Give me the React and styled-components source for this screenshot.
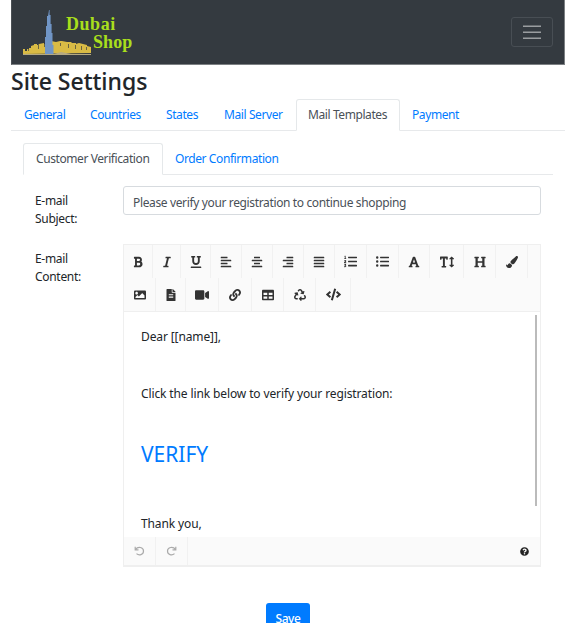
import React from "react";
import styled, { createGlobalStyle } from "styled-components";
import {
  FaBold, FaItalic, FaUnderline, FaAlignLeft, FaAlignCenter, FaAlignRight, FaAlignJustify,
  FaListOl, FaListUl, FaFont, FaTextHeight, FaHeading, FaPaintBrush, FaImage, FaFileAlt,
  FaVideo, FaLink, FaTable, FaRecycle, FaCode, FaQuestionCircle,
} from "react-icons/fa";

const Global = createGlobalStyle`
  * { box-sizing: border-box; }
  html, body { margin: 0; background: #fff; }
  body {
    height: 623px;
    overflow: hidden;
    color: #212529;
    font: 12px/18px "Noto Sans", "Open Sans", sans-serif;
  }
`;

const Page = styled.div`
  width: 554px;
  height: 623px;
  margin-left: 11px;
  overflow: hidden;
`;

const Navbar = styled.header`
  height: 65px;
  display: flex;
  justify-content: space-between;
  padding: 0 11px;
  background: #343a40;
  border: 1px solid #7c8083;
  border-top: 0;
  border-left-color: #4b5055;
`;

const Brand = styled.div`
  display: flex;
`;

const BrandName = styled.div`
  padding-top: 15px;
  margin-left: -26px;
  color: #a9df1c;
  font: 700 18px/18px "Liberation Serif", serif;
  letter-spacing: 0.55px;
  span { display: block; }
  span + span { margin-left: 27px; letter-spacing: 0.1px; }
`;

const MenuButton = styled.button`
  width: 42px;
  height: 30px;
  margin-top: 17px;
  padding: 0;
  display: flex;
  align-items: center;
  justify-content: center;
  background: transparent;
  border: 1px solid #484e54;
  border-radius: 3px;
`;

const Title = styled.h1`
  margin: 0;
  height: 34px;
  font: 500 23px/32px "Noto Sans", sans-serif;
  -webkit-text-stroke: 0.12px #212529;
  white-space: nowrap;
`;

const Tabs = styled.nav`
  display: flex;
  height: 32px;
  width: ${(p) => p.$width}px;
  margin: ${(p) => p.$margin || 0};
  border-bottom: 1px solid #e7e9eb;
`;

const Tab = styled.a`
  height: 32px;
  width: ${(p) => p.$width}px;
  padding-left: ${(p) => p.$inset || 12}px;
  line-height: 30px;
  white-space: nowrap;
  letter-spacing: -0.41px;
  color: ${(p) => (p.$active ? "#495057" : "#007bff")};
  background: ${(p) => (p.$active ? "#fff" : "transparent")};
  border: 1px solid ${(p) => (p.$active ? "#e5e8ea" : "transparent")};
  border-bottom-color: ${(p) => (p.$active ? "#fff" : "transparent")};
  border-radius: 3px 3px 0 0;
`;

const FormRow = styled.div`
  display: grid;
  grid-template-columns: 88px 418px;
  margin: ${(p) => p.$margin};
`;

const Label = styled.label`
  padding-top: ${(p) => p.$top}px;
  letter-spacing: -0.3px;
`;

const SubjectField = styled.div`
  height: 29px;
  padding: 1px 9px 0;
  line-height: 29px;
  border: 1px solid #d7dbdf;
  border-radius: 3px;
  color: #495057;
  letter-spacing: -0.36px;
`;

const Editor = styled.section`
  height: 323px;
  border: 1px solid #efefef;
  border-bottom-width: 2px;
`;

const Toolbar = styled.div`
  height: 67px;
  background: #fafafa;
  border-bottom: 1px solid #efefef;
  color: #333;
`;

const ToolRow = styled.div`
  display: flex;
  height: ${(p) => p.$height}px;
`;

const Tool = styled.button`
  width: ${(p) => p.$width}px;
  padding: 0;
  display: flex;
  align-items: center;
  justify-content: center;
  color: inherit;
  background: transparent;
  border: 0;
  border-right: 1px solid #f1f1f1;
  font-size: ${(p) => p.$size || 12}px;
`;

const Content = styled.div`
  position: relative;
  height: 225px;
  padding: 16px 17px 0;
  overflow: hidden;
`;

const Line = styled.p`
  margin: ${(p) => p.$margin || 0};
  letter-spacing: -0.12px;
  white-space: nowrap;
`;

const VerifyLink = styled.a`
  display: block;
  margin-top: 36px;
  color: #007bff;
  font-size: 21px;
  line-height: 30px;
`;

const Scrollbar = styled.i`
  position: absolute;
  top: 3px;
  right: 3px;
  width: 2.5px;
  height: 191px;
  background: #bbb;
`;

const Footer = styled.footer`
  display: flex;
  justify-content: space-between;
  height: 28px;
  background: #fafafa;
  color: #aaa;
`;

const Help = styled.span`
  display: flex;
  align-items: center;
  padding-right: 11px;
  color: #222;
  font-size: 9px;
`;

const SaveButton = styled.button`
  display: block;
  width: 44px;
  height: 31px;
  margin: 36px 0 0 255px;
  padding: 0;
  border: 0;
  border-radius: 3px;
  color: #fff;
  background: #007bff;
  font: 500 12px/28px "Noto Sans", sans-serif;
  letter-spacing: -0.4px;
`;

const Skyline = () => (
  <svg width="69" height="58" viewBox="0 0 69 58">
    <path fill="#d9bb45" d="M0 54V49h2v2h2v-2h2v-1h2v-2l3-1v-1h3v1h2v-1l5-1v1h2v-2h5v-1l5 1 4-1h2l5 1h4l1 1h4v1l3-1 4 1 4 1v1l4 1v6z" />
    <path stroke="#6b6440" d="M5.500 49v2M15.500 44v5M21.500 44v3M37.500 43v3M45.500 44v4M52.500 45v4M58.500 46v4M63.500 47v3" />
    <path fill="#b5a982" d="M0 54h68v1H0zM31 54l7-2 10 2z" />
    <path fill="#7095c6" d="M26 10h.6v5h1v9h1v9h.900v12h1v9H22V37h1V26h1V16h1z" />
  </svg>
);

const Hamburger = () => (
  <svg width="18" height="16" viewBox="0 0 18 16">
    <path stroke="#9a9da0" strokeWidth="1.5" d="M0 2.200h18M0 8.200h18M0 14.200h18" />
  </svg>
);

const Turn = ({ flip }) => (
  <svg width="11" height="10" viewBox="0 0 11 10">
    <path
      transform={flip ? "translate(11 0) scale(-1 1)" : undefined}
      d="M1.200 0.800v3h3.300M1.500 3.500C4 0 9.500 1.200 9.500 5c0 3.800-4.500 5-7 2.600"
      fill="none" stroke="#aaa" strokeWidth="1.200"
    />
  </svg>
);

const FIRST_TOOLS = [
  [FaBold, 29], [FaItalic, 28], [FaUnderline, 30], [FaAlignLeft, 31], [FaAlignCenter, 31],
  [FaAlignRight, 31], [FaAlignJustify, 31], [FaListOl, 32, 13], [FaListUl, 32, 13], [FaFont, 31],
  [FaTextHeight, 34, 14], [FaHeading, 32, 12], [FaPaintBrush, 32, 12],
];
const SECOND_TOOLS = [
  [FaImage, 32, 12], [FaFileAlt, 30, 12], [FaVideo, 33, 14], [FaLink, 33, 12],
  [FaTable, 32, 12], [FaRecycle, 32, 12], [FaCode, 35, 15],
];

const Tools = ({ items, height }) => (
  <ToolRow $height={height}>
    {items.map(([Icon, width, size], i) => (
      <Tool key={i} $width={width} $size={size}><Icon /></Tool>
    ))}
  </ToolRow>
);

export default function App() {
  return (
    <>
      <Global />
      <Page>
        <Navbar>
          <Brand>
            <Skyline />
            <BrandName><span>Dubai</span><span>Shop</span></BrandName>
          </Brand>
          <MenuButton aria-label="Menu"><Hamburger /></MenuButton>
        </Navbar>
        <Title>Site Settings</Title>
        <Tabs $width={554}>
          <Tab $width={66}>General</Tab>
          <Tab $width={76}>Countries</Tab>
          <Tab $width={58}>States</Tab>
          <Tab $width={85}>Mail Server</Tab>
          <Tab $width={104} $inset={11} $active>Mail Templates</Tab>
          <Tab $width={72} $inset={11}>Payment</Tab>
        </Tabs>
        <Tabs $width={530} $margin="12px 0 0 12px">
          <Tab $width={140} $active>Customer Verification</Tab>
          <Tab $width={130} $inset={11}>Order Confirmation</Tab>
        </Tabs>
        <FormRow $margin="11px 0 0 24px">
          <Label $top={6}>E-mail<br />Subject:</Label>
          <SubjectField>Please verify your registration to continue shopping</SubjectField>
        </FormRow>
        <FormRow $margin="16px 0 0 24px">
          <Label $top={6}>E-mail<br />Content:</Label>
          <Editor>
            <Toolbar>
              <Tools items={FIRST_TOOLS} height={33} />
              <Tools items={SECOND_TOOLS} height={33} />
            </Toolbar>
            <Content>
              <Line>Dear [[name]],</Line>
              <Line $margin="39px 0 0">Click the link below to verify your registration:</Line>
              <VerifyLink>VERIFY</VerifyLink>
              <Line $margin="46px 0 0">Thank you,</Line>
              <Scrollbar />
            </Content>
            <Footer>
              <ToolRow $height={28}>
                <Tool $width={32}><Turn /></Tool>
                <Tool $width={32}><Turn flip /></Tool>
              </ToolRow>
              <Help><FaQuestionCircle /></Help>
            </Footer>
          </Editor>
        </FormRow>
        <SaveButton>Save</SaveButton>
      </Page>
    </>
  );
}
